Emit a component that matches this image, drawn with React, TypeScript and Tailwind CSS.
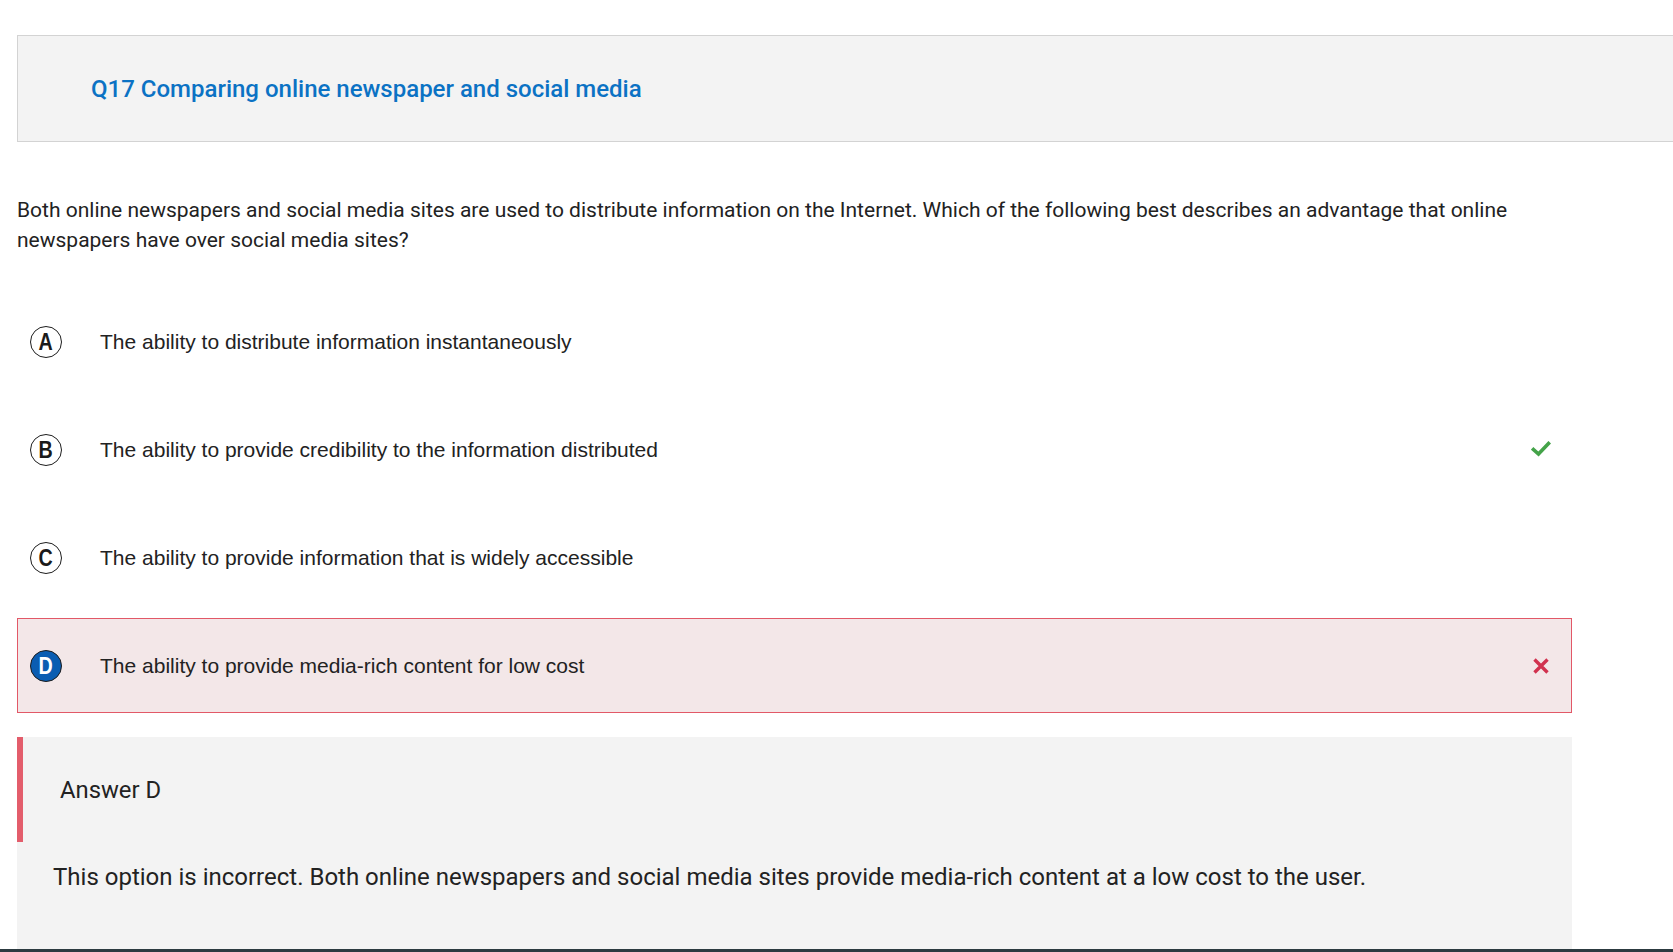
import React from "react";

const roboto = { fontFamily: "Roboto, 'Liberation Sans', sans-serif" };

type Opt = { letter: string; text: string; state?: "correct" | "wrong" };

const options: Opt[] = [
  { letter: "A", text: "The ability to distribute information instantaneously" },
  { letter: "B", text: "The ability to provide credibility to the information distributed", state: "correct" },
  { letter: "C", text: "The ability to provide information that is widely accessible" },
  { letter: "D", text: "The ability to provide media-rich content for low cost", state: "wrong" },
];

function Badge({ letter, selected }: { letter: string; selected?: boolean }) {
  return (
    <div
      className={
        "flex h-[32px] w-[32px] shrink-0 items-center justify-center rounded-full border-[1.5px] border-[#1d1d1d] font-['Liberation_Sans',Arial,sans-serif] text-[24px] font-bold leading-none " +
        (selected ? "bg-[#0a5db2] text-white" : "bg-white text-[#1a1a1a]")
      }
    >
      <span className="scale-x-[0.82]">{letter}</span>
    </div>
  );
}

function CheckIcon() {
  return (
    <svg width="20" height="16" viewBox="0 0 20 16" fill="none">
      <path d="M2.5 8.5 L7.5 13 L17.5 2.5" stroke="#44a349" strokeWidth="3.6" strokeLinecap="square" />
    </svg>
  );
}

function CrossIcon() {
  return (
    <svg width="18" height="18" viewBox="0 0 18 18" fill="none">
      <path d="M2.5 2.5 L15.5 15.5 M15.5 2.5 L2.5 15.5" stroke="#d1324f" strokeWidth="3.4" strokeLinecap="butt" />
    </svg>
  );
}

export default function App() {
  return (
    <div className="flex h-[952px] w-full flex-col overflow-hidden bg-white text-[#212121]">
      {/* Header */}
      <div className="ml-[17px] mt-[35px] flex h-[107px] shrink-0 items-center border-y border-l border-[#d3d3d3] bg-[#f3f3f3] pl-[73px]">
        <h1 style={roboto} className="text-[24px] font-medium leading-none text-[#0b72c4]">
          Q17 Comparing online newspaper and social media
        </h1>
      </div>

      {/* Question */}
      <p style={roboto} className="ml-[17px] mt-[53px] w-[1555px] text-[21px] leading-[30px] text-[#222]">
        Both online newspapers and social media sites are used to distribute information on the Internet. Which of the following best describes an advantage that online newspapers have over social media sites?
      </p>

      {/* Options */}
      <div className="ml-[17px] mt-[39px] flex w-[1555px] flex-col gap-[13px]">
        {options.map((o) => (
          <div
            key={o.letter}
            className={
              "flex h-[95px] items-center border pl-[12px] pr-[20px] " +
              (o.state === "wrong" ? "border-[#e25867] bg-[#f3e7e8]" : "border-transparent")
            }
          >
            <Badge letter={o.letter} selected={o.state === "wrong"} />
            <span className="ml-[38px] flex-1 font-['Liberation_Sans',Arial,sans-serif] text-[21px] leading-none text-[#222]">
              {o.text}
            </span>
            <div className="flex w-[20px] items-center justify-center">
              {o.state === "correct" && (
                <div className="-mt-[2px]">
                  <CheckIcon />
                </div>
              )}
              {o.state === "wrong" && <CrossIcon />}
            </div>
          </div>
        ))}
      </div>

      {/* Answer explanation */}
      <div className="ml-[17px] mt-[24px] w-[1555px] flex-1 bg-[#f3f3f3]">
        <div className="flex h-[105px] items-center border-l-[6px] border-[#e35d6b] pl-[37px] pt-[2px]">
          <span style={roboto} className="text-[23.8px] leading-none text-[#222]">
            Answer D
          </span>
        </div>
        <p style={roboto} className="mt-[21px] pl-[36px] text-[24px] leading-[28px] text-[#222]">
          This option is incorrect. Both online newspapers and social media sites provide media-rich content at a low cost to the user.
        </p>
      </div>
      <div className="h-[3px] shrink-0 bg-[#2c3a40]" />
    </div>
  );
}
